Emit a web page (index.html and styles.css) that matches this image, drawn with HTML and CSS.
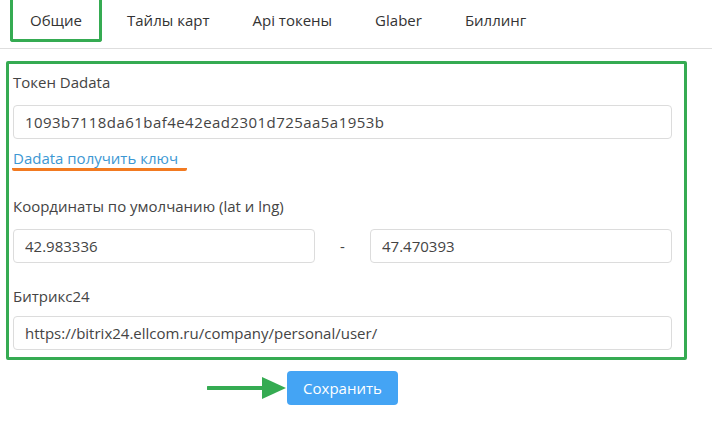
FILE: index.html
```html
<!DOCTYPE html>
<html lang="ru">
<head>
<meta charset="UTF-8" />
<title>Настройки</title>
<link rel="stylesheet" href="styles.css">
</head>
<body>
<nav class="tabs">
  <a class="tab active" href="#">Общие</a>
  <a class="tab" href="#">Тайлы карт</a>
  <a class="tab" href="#">Api токены</a>
  <a class="tab" href="#">Glaber</a>
  <a class="tab" href="#">Биллинг</a>
</nav>

<div class="panel">
  <label class="label">Токен Dadata</label>
  <input class="field token" type="text" value="1093b7118da61baf4e42ead2301d725aa5a1953b">
  <a class="link" href="#">Dadata получить ключ</a>

  <label class="label label-coords">Координаты по умолчанию (lat и lng)</label>
  <div class="coords">
    <input class="field" type="text" value="42.983336">
    <span class="dash">-</span>
    <input class="field" type="text" value="47.470393">
  </div>

  <label class="label label-bitrix">Битрикс24</label>
  <input class="field" type="text" value="https://bitrix24.ellcom.ru/company/personal/user/">
</div>

<div class="actions">
  <svg class="arrow" width="80" height="24" viewBox="0 0 80 24">
    <line x1="1" y1="12" x2="58" y2="12" stroke="#35ab52" stroke-width="4" stroke-linecap="round"/>
    <polygon points="55,1 79,12 55,23" fill="#35ab52"/>
  </svg>
  <button class="save">Сохранить</button>
</div>
</body>
</html>
```

FILE: styles.css
```css
body {
  margin: 0;
  background: #fff;
  color: #444;
  font-family: "Open Sans", "Noto Sans", sans-serif;
  font-size: 15px;
}
.tabs {
  display: flex;
  height: 48px;
  border-bottom: 1px solid #dedede;
  padding-left: 10px;
}
.tab {
  display: block;
  box-sizing: border-box;
  height: 42px;
  line-height: 40px;
  padding: 0 21px 0 22px;
  color: #333;
  text-decoration: none;
  font-size: 15px;
}
.tab.active {
  border: 3px solid #35ab52;
  border-top: none;
  border-radius: 0 0 3px 3px;
  padding: 0 17px;
  margin-right: 3px;
}
.panel {
  width: 659px;
  margin: 12px 0 0 6px;
  padding: 8px 12px 7px 4px;
  border: 3px solid #35ab52;
  border-radius: 2px;
}
.label {
  display: block;
  line-height: 20px;
  margin-bottom: 13px;
  color: #444;
}
.label-coords { margin-top: 25px; }
.label-bitrix { margin-top: 23px; margin-bottom: 10px; }
.field {
  display: block;
  box-sizing: border-box;
  width: 100%;
  height: 34px;
  padding: 0 11px;
  border: 1px solid #dcdcdc;
  border-radius: 4px;
  font-family: inherit;
  font-size: 15px;
  color: #444;
}
.token {
  letter-spacing: 0.45px;
}
.link {
  display: inline-block;
  margin-top: 9px;
  line-height: 20px;
  padding: 0 9px 0 1px;
  margin-left: -1px;
  color: #3c97d3;
  text-decoration: none;
  border-bottom: 3px solid #f27a21;
  border-radius: 2px;
}
.coords {
  display: grid;
  grid-template-columns: 1fr 55px 1fr;
  align-items: center;
}
.dash {
  text-align: center;
}
.actions {
  display: flex;
  align-items: center;
  margin: 11px 0 0 207px;
}
.arrow {
  display: block;
}
.save {
  width: 111px;
  height: 34px;
  border: none;
  border-radius: 4px;
  background: #44a4f4;
  color: #fff;
  font-family: inherit;
  font-size: 15px;
}
```
